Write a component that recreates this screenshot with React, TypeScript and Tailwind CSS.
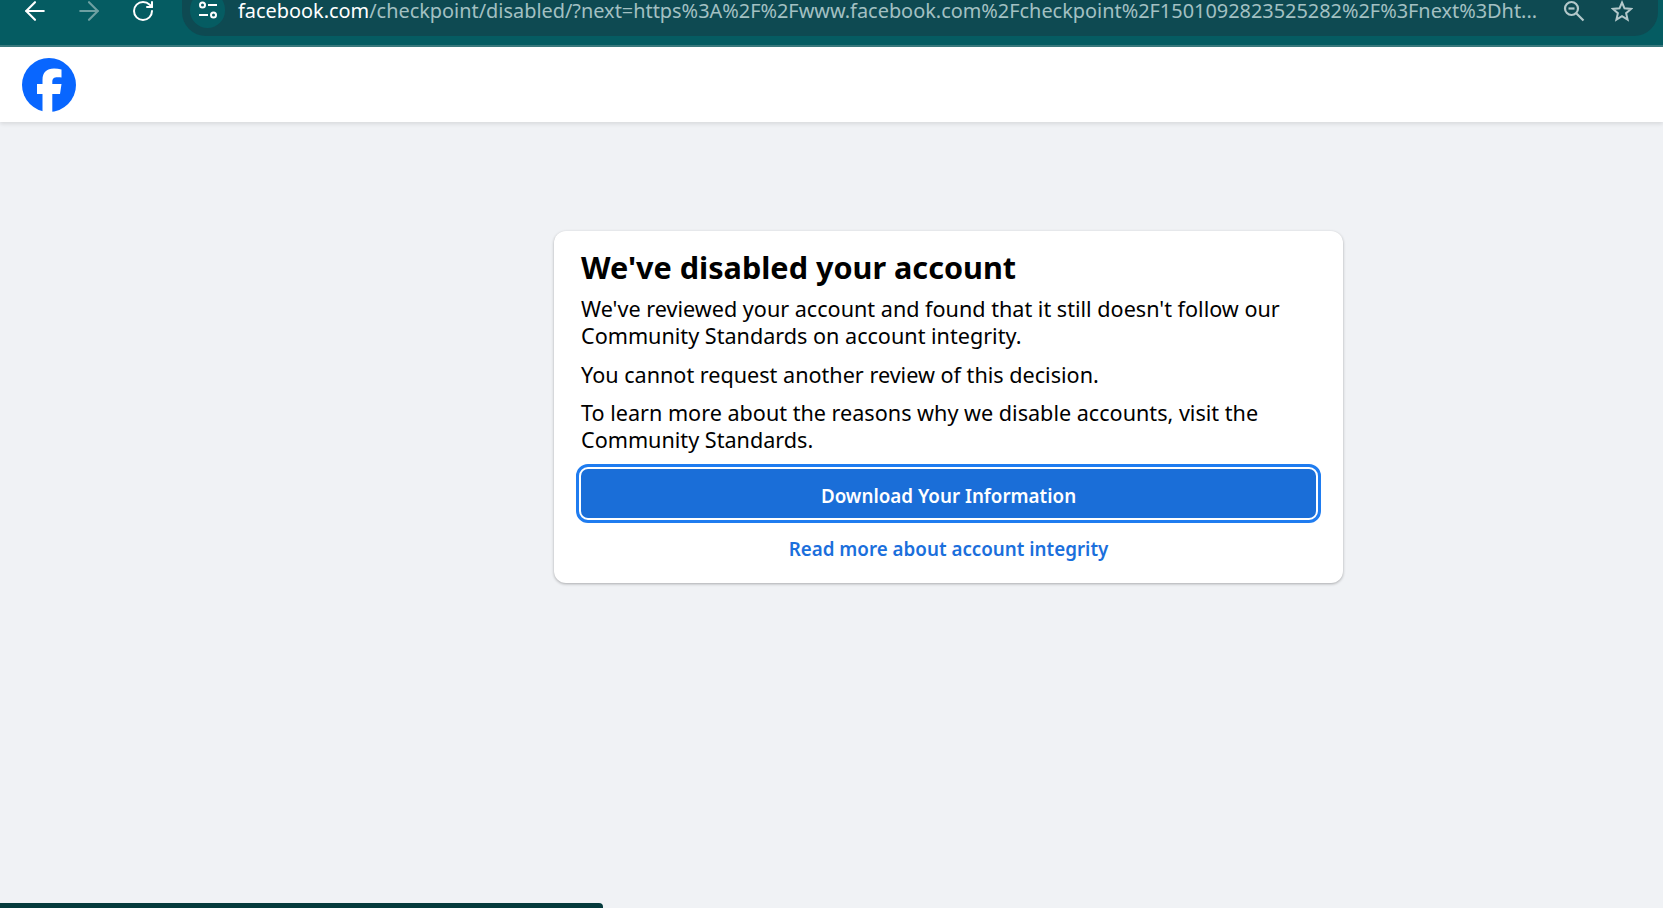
import { ArrowLeft, ArrowRight, RotateCw } from 'lucide-react';

function SiteInfoIcon() {
  return (
    <svg width="20" height="18" viewBox="0 0 20 18" fill="none" stroke="white" strokeWidth="2">
      <circle cx="4.5" cy="4" r="2.5" />
      <path d="M10 4h9" />
      <path d="M1 14h9" />
      <circle cx="15.5" cy="14" r="2.5" />
    </svg>
  );
}

function ZoomIcon() {
  return (
    <svg width="22" height="22" viewBox="0 0 22 22" fill="none" stroke="currentColor" strokeWidth="2.2">
      <circle cx="8.5" cy="8.5" r="6.5" />
      <path d="M5.5 8.5h6" />
      <path d="M13 13l7.5 7.5" />
    </svg>
  );
}

function StarIcon() {
  return (
    <svg width="22" height="22" viewBox="0 0 22 22" fill="none" stroke="currentColor" strokeWidth="2">
      <polygon points="11,2.5 13.5,8.3 20,8.9 15.1,13.2 16.6,19.6 11,16.2 5.4,19.6 6.9,13.2 2,8.9 8.5,8.3" />
    </svg>
  );
}

function FacebookLogo() {
  return (
    <svg width="54" height="54" viewBox="0 0 54 54">
      <circle cx="27" cy="27" r="27" fill="#0866ff" />
      <path
        fill="white"
        d="M20.5 54V36H15V26h5.5v-4c0-7.5 4-11.5 11.5-11.5 2.5 0 5 .5 7.5 1v8c-1-.2-2.5-.3-4-.3-3.5 0-5.2 1.3-5.2 4.8v2h9.2l-1.5 10h-7.7v18z"
      />
    </svg>
  );
}

export default function App() {
  return (
    <div className="h-[908px] flex flex-col bg-[#f0f2f5] overflow-hidden font-['Noto_Sans',sans-serif]">
      {/* Browser toolbar, cut off at the top */}
      <div className="h-[47px] shrink-0 bg-[#055c62] border-b-2 border-[#3a7a7e] flex overflow-hidden">
        <div className="w-[182px] shrink-0 h-[22px] flex items-center pl-[20px] text-white">
          <ArrowLeft size={30} strokeWidth={1.7} className="shrink-0" />
          <ArrowRight size={30} strokeWidth={1.7} className="shrink-0 ml-[24px] text-[#6ea0a2]" />
          <RotateCw size={24} strokeWidth={2} className="shrink-0 ml-[27px]" />
        </div>
        <div className="w-[1476px] h-[60px] -mt-[24px] rounded-[24px] bg-[#0e4a52] flex items-start pt-[8px] pl-[8px] pr-[25px]">
          <div className="w-[35px] h-[36px] rounded-full bg-[#055c62] shrink-0 flex items-center justify-center mt-[8px]">
            <SiteInfoIcon />
          </div>
          <div className="ml-[13px] mt-[13px] text-[19.9px] leading-[28px] whitespace-nowrap text-[#a3c0c2]">
            <span className="text-white">facebook.com</span>
            /checkpoint/disabled/?next=https%3A%2F%2Fwww.facebook.com%2Fcheckpoint%2F1501092823525282%2F%3Fnext%3Dht...
          </div>
          <div className="ml-auto flex items-center gap-[26px] mt-[16px] text-[#b3c8ca]">
            <ZoomIcon />
            <StarIcon />
          </div>
        </div>
      </div>

      {/* Page header */}
      <div className="h-[75px] shrink-0 bg-white flex items-center pl-[22px] shadow-[0_2px_4px_rgba(0,0,0,0.1)] relative">
        <FacebookLogo />
      </div>

      <div className="flex-1 pt-[109px] pl-[554px]">
        <div className="w-[789px] h-[352px] bg-white rounded-[12px] shadow-[0_1px_3px_rgba(0,0,0,0.3)] px-[27px] pt-[17px] text-black">
          <h1 className="text-[30.6px] leading-[38px] font-bold">We've disabled your account</h1>
          <div className="mt-[9px] text-[21.6px] leading-[27px]">
            <p>
              We've reviewed your account and found that it still doesn't follow our Community Standards on account integrity.
            </p>
            <p className="mt-[12px]">You cannot request another review of this decision.</p>
            <p className="mt-[11px]">
              To learn more about the reasons why we disable accounts, visit the Community Standards.
            </p>
          </div>
          <button className="mt-[11px] -ml-[5px] block w-[745px] h-[59px] rounded-[12px] border-[3px] border-[#1f7cf0] bg-white p-[2px]">
            <span className="h-full pt-[5px] rounded-[7px] bg-[#1a6ed8] text-white text-[18.8px] font-semibold flex items-center justify-center">
              Download Your Information
            </span>
          </button>
          <div className="mt-[10px] text-center text-[18.8px] leading-[32px] font-semibold text-[#1b6fdc] -ml-[5px] w-[745px]">
            Read more about account integrity
          </div>
        </div>
      </div>

      <div className="w-[603px] h-[5px] shrink-0 bg-[#053a3c] rounded-tr-[4px]" />
    </div>
  );
}
